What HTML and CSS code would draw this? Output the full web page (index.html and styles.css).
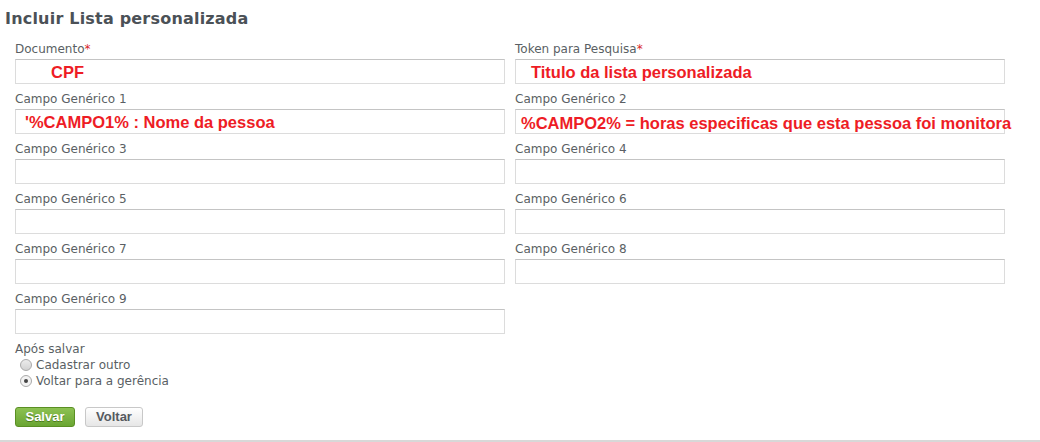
FILE: index.html
```html
<!DOCTYPE html>
<html>
<head>
<meta charset="utf-8">
<link rel="stylesheet" href="styles.css">
</head>
<body>
<div class="page">
  <h1 class="title">Incluir Lista personalizada</h1>
  <div class="grid">
    <div class="field">
      <label class="lbl">Documento<span class="req">*</span></label>
      <div class="input"><span class="note note-cpf">CPF</span></div>
    </div>
    <div class="field">
      <label class="lbl">Token para Pesquisa<span class="req">*</span></label>
      <div class="input"><span class="note note-token">Titulo da lista personalizada</span></div>
    </div>
    <div class="field">
      <label class="lbl">Campo Genérico 1</label>
      <div class="input"><span class="note note-c1">'%CAMPO1% : Nome da pessoa</span></div>
    </div>
    <div class="field">
      <label class="lbl">Campo Genérico 2</label>
      <div class="input"><span class="note note-c2">%CAMPO2% = horas especificas que esta pessoa foi monitora</span></div>
    </div>
    <div class="field">
      <label class="lbl">Campo Genérico 3</label>
      <div class="input"></div>
    </div>
    <div class="field">
      <label class="lbl">Campo Genérico 4</label>
      <div class="input"></div>
    </div>
    <div class="field">
      <label class="lbl">Campo Genérico 5</label>
      <div class="input"></div>
    </div>
    <div class="field">
      <label class="lbl">Campo Genérico 6</label>
      <div class="input"></div>
    </div>
    <div class="field">
      <label class="lbl">Campo Genérico 7</label>
      <div class="input"></div>
    </div>
    <div class="field">
      <label class="lbl">Campo Genérico 8</label>
      <div class="input"></div>
    </div>
    <div class="field">
      <label class="lbl">Campo Genérico 9</label>
      <div class="input"></div>
    </div>
  </div>
  <div class="after">
    <div class="lbl">Após salvar</div>
    <div class="radio-row"><span class="radio"></span>Cadastrar outro</div>
    <div class="radio-row"><span class="radio checked"></span>Voltar para a gerência</div>
  </div>
  <div class="actions">
    <button class="btn btn-save">Salvar</button>
    <button class="btn btn-back">Voltar</button>
  </div>
</div>
</body>
</html>
```
FILE: styles.css
```css
html, body {
  margin: 0;
  padding: 0;
  background: #fff;
}
.page {
  width: 1040px;
  height: 440px;
  border-bottom: 2px solid #d8d8d8;
  box-sizing: content-box;
  font-family: "DejaVu Sans", Tahoma, sans-serif;
}
.title {
  margin: 0;
  padding: 8px 0 0 5px;
  height: 30px;
  box-sizing: border-box;
  font-family: "DejaVu Sans", Tahoma, sans-serif;
  font-weight: bold;
  font-size: 16px;
  letter-spacing: 0.2px;
  line-height: 22px;
  color: #4b5157;
}
.grid {
  display: grid;
  grid-template-columns: 490px 490px;
  column-gap: 10px;
  padding: 9px 0 0 15px;
}
.field {
  height: 50px;
}
.lbl {
  display: block;
  font-size: 12px;
  line-height: 20px;
  color: #5a5f64;
  height: 20px;
}
.req {
  color: #d9262a;
}
.input {
  position: relative;
  height: 25px;
  box-sizing: border-box;
  border: 1px solid #dcdcdc;
  border-top-color: #c4c4c4;
  background: #fff;
}
.note {
  position: absolute;
  top: 2px;
  white-space: nowrap;
  font-family: "Liberation Sans", Arial, sans-serif;
  font-weight: bold;
  font-size: 16.5px;
  line-height: 20px;
  color: #ee1c25;
}
.note-cpf { left: 35px; }
.note-token { left: 15px; }
.note-c1 { left: 9px; }
.note-c2 { left: 5px; top: 3px; }
.after {
  padding: 2px 0 0 15px;
}
.after .lbl {
  height: 16px;
  line-height: 16px;
}
.radio-row {
  display: flex;
  align-items: center;
  height: 16px;
  font-size: 12px;
  color: #5a5f64;
  padding-left: 5px;
}
.radio {
  width: 12px;
  height: 12px;
  border-radius: 50%;
  box-sizing: border-box;
  border: 1px solid #a9a9a9;
  background: linear-gradient(#ececec, #d2d2d2);
  margin-right: 4px;
  position: relative;
}
.radio.checked::after {
  content: "";
  position: absolute;
  left: 3px;
  top: 3px;
  width: 4px;
  height: 4px;
  border-radius: 50%;
  background: #444;
}
.radio.checked {
  background: #f2f2f2;
}
.actions {
  display: flex;
  gap: 10px;
  padding: 18px 0 0 15px;
}
.btn {
  height: 20px;
  box-sizing: border-box;
  border-radius: 3px;
  font-family: "Liberation Sans", Arial, sans-serif;
  font-weight: bold;
  font-size: 13px;
  line-height: 18px;
  padding: 0;
  cursor: pointer;
}
.btn-save {
  width: 60px;
  color: #fff;
  border: 1px solid #5a8f23;
  background: linear-gradient(#8cc152, #6aa532);
  text-shadow: 0 1px 0 #4d7a1e;
}
.btn-back {
  width: 58px;
  color: #555a60;
  border: 1px solid #c8c8c8;
  background: linear-gradient(#ffffff, #e6e6e6);
}
```
